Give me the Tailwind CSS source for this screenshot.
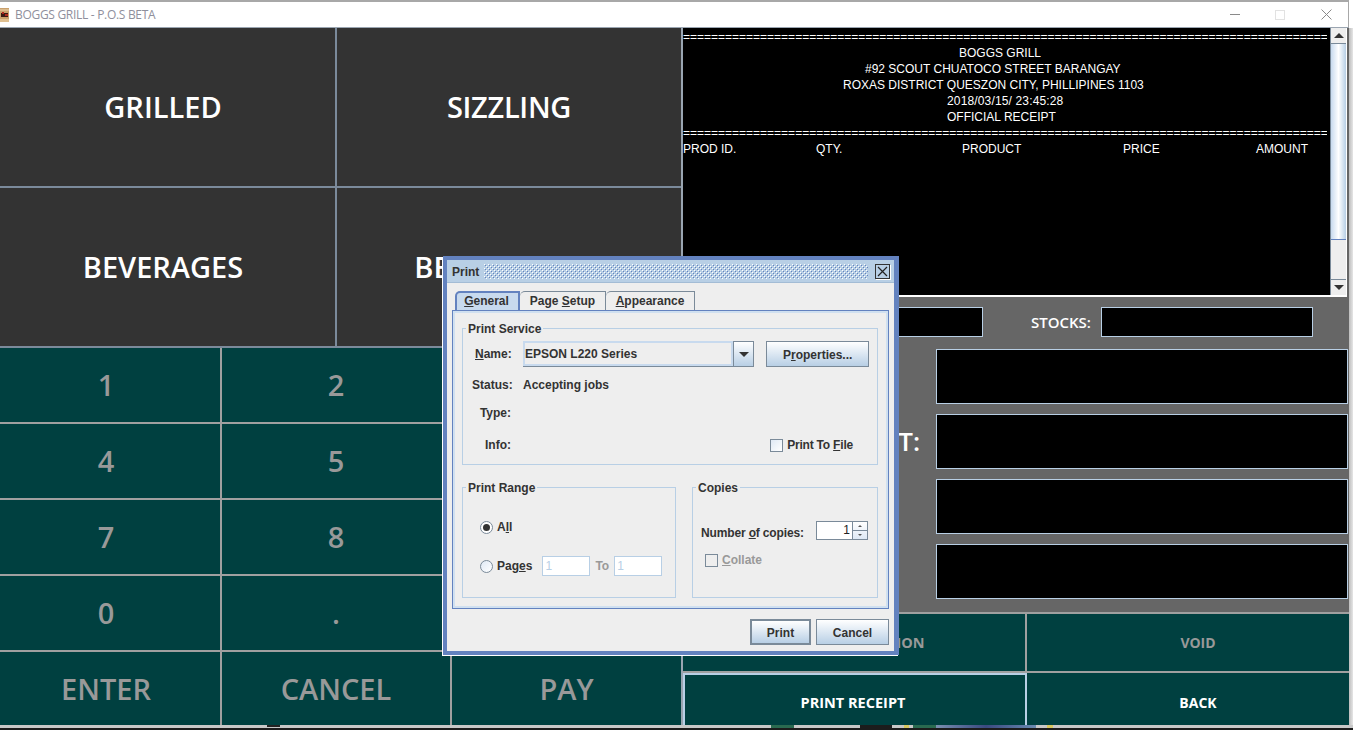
<!DOCTYPE html>
<html lang="en">
<head>
<meta charset="UTF-8">
<title>BOGGS GRILL - P.O.S BETA</title>
<script src="https://cdn.jsdelivr.net/npm/@tailwindcss/browser@4"></script>
</head>
<body class="bg-white overflow-hidden">
<div class="relative w-[1353px] h-[730px] overflow-hidden">
  <div class="flex h-[725px]">
    <div class="w-[1349px] shrink-0 flex flex-col">
      <!-- window title bar -->
      <div class="h-[28px] shrink-0 bg-white border-t-2 border-[#a8a8a8] border-b border-b-[#9aa5b1] border-r border-r-[#a8a8a8] flex items-center font-['Open_Sans',sans-serif] text-[12px] tracking-[-0.3px] text-[#8f8f9c]">
        <svg class="w-[9px] h-[14px] shrink-0" viewBox="0 0 9 14"><rect width="9" height="14" fill="#c9a06c"/><rect y="1" width="9" height="2" fill="#dcbb8c"/><rect x="1" y="5" width="7" height="4" fill="#3a1a14"/><rect x="2" y="4" width="2" height="2" fill="#b02a20"/><rect x="5" y="6" width="3" height="2" fill="#b02a20"/><rect y="11" width="9" height="3" fill="#e0c090"/></svg>
        <span class="ml-[6px]">BOGGS GRILL - P.O.S BETA</span>
        <div class="ml-auto flex items-center">
          <span class="w-[10px] h-px bg-[#8a8a8a]"></span>
          <span class="ml-[35px] w-[10px] h-[10px] border border-[#e2e2e2]"></span>
          <svg class="ml-[36px] mr-[16px] w-[11px] h-[11px]" viewBox="0 0 11 11"><path d="M0.5 0.5L10.5 10.5M10.5 0.5L0.5 10.5" stroke="#8a8a8a" fill="none"/></svg>
        </div>
      </div>
      <div class="flex flex-1 min-h-0">
        <!-- left: categories and keypad -->
        <div class="w-[681px] shrink-0 flex flex-col font-['Open_Sans',sans-serif] font-semibold">
          <div class="grid grid-cols-[337px_344px] grid-rows-[160px_160px] h-[320px] bg-[#333333] text-white text-[29px]">
            <div class="flex items-center justify-center border-r-2 border-b-2 border-[#7b8a9b] pr-[9px]">GRILLED</div>
            <div class="flex items-center justify-center border-b-2 border-[#7b8a9b] tracking-[-0.3px]">SIZZLING</div>
            <div class="flex items-center justify-center border-r-2 border-b-2 border-[#7b8a9b] pr-[9px]">BEVERAGES</div>
            <div class="flex items-center justify-center border-b-2 border-[#7b8a9b]">BEST SELLERS</div>
          </div>
          <div class="grid grid-cols-[222px_230px_229px] grid-rows-[76px_76px_76px_76px_73px] flex-1 bg-[#004040] text-[#999999] text-[29px]">
            <div class="flex items-center justify-center border-r-2 border-b-2 border-[#a0a0a0] pr-[8px]">1</div>
            <div class="flex items-center justify-center border-r-2 border-b-2 border-[#a0a0a0]">2</div>
            <div class="flex items-center justify-center border-b-2 border-[#a0a0a0]">3</div>
            <div class="flex items-center justify-center border-r-2 border-b-2 border-[#a0a0a0] pr-[8px]">4</div>
            <div class="flex items-center justify-center border-r-2 border-b-2 border-[#a0a0a0]">5</div>
            <div class="flex items-center justify-center border-b-2 border-[#a0a0a0]">6</div>
            <div class="flex items-center justify-center border-r-2 border-b-2 border-[#a0a0a0] pr-[8px]">7</div>
            <div class="flex items-center justify-center border-r-2 border-b-2 border-[#a0a0a0]">8</div>
            <div class="flex items-center justify-center border-b-2 border-[#a0a0a0]">9</div>
            <div class="flex items-center justify-center border-r-2 border-b-2 border-[#a0a0a0] pr-[8px]">0</div>
            <div class="flex items-center justify-center border-r-2 border-b-2 border-[#a0a0a0]">.</div>
            <div class="border-b-2 border-[#a0a0a0]"></div>
            <div class="flex items-center justify-center border-r-2 border-[#a0a0a0] pr-[8px]">ENTER</div>
            <div class="flex items-center justify-center border-r-2 border-[#a0a0a0]">CANCEL</div>
            <div class="flex items-center justify-center">PAY</div>
          </div>
        </div>
        <!-- right: receipt, totals and actions -->
        <div class="flex-1 flex flex-col bg-[#666666] border-l-2 border-[#9aa5b1]">
          <div class="h-[269px] w-[664px] shrink-0 flex bg-black border-b-2 border-r border-white">
            <div class="flex-1 overflow-hidden font-['Liberation_Sans',sans-serif] text-[12px] leading-[16px] text-white whitespace-nowrap pt-px">
              <div class="w-[644px] overflow-hidden">============================================================================================</div>
              <div class="pl-[276px]">BOGGS GRILL</div>
              <div class="pl-[182px]">#92 SCOUT CHUATOCO STREET BARANGAY</div>
              <div class="pl-[160px]">ROXAS DISTRICT QUESZON CITY, PHILLIPINES 1103</div>
              <div class="pl-[264px] tracking-[0.15px]">2018/03/15/ 23:45:28</div>
              <div class="pl-[264px]">OFFICIAL RECEIPT</div>
              <div class="w-[644px] overflow-hidden">============================================================================================</div>
              <div class="flex">
                <span class="w-[133px]">PROD ID.</span><span class="w-[146px]">QTY.</span><span class="w-[161px]">PRODUCT</span><span class="w-[133px]">PRICE</span><span>AMOUNT</span>
              </div>
            </div>
            <!-- scrollbar -->
            <div class="w-[16px] shrink-0 flex flex-col bg-[#eeeeee] border-l border-[#7a8a99]">
              <div class="h-[16px] flex items-center justify-center border-b border-[#7a8a99]"><span class="w-0 h-0 border-x-[5px] border-x-transparent border-b-[5px] border-b-[#333333]"></span></div>
              <div class="h-[196px] bg-gradient-to-r from-[#c8daee] via-white to-[#b8cfe5] border-b border-[#6382bf]"></div>
              <div class="flex-1"></div>
              <div class="h-[16px] flex items-center justify-center border-t border-[#7a8a99]"><span class="w-0 h-0 border-x-[5px] border-x-transparent border-t-[5px] border-t-[#333333]"></span></div>
            </div>
          </div>
          <div class="font-['Open_Sans',sans-serif] font-semibold text-white flex-1 flex flex-col">
            <div class="h-[52px] flex items-center text-[15px] pb-[2px]">
              <div class="ml-[215px] w-[85px] h-[30px] bg-black border border-[#b8cfe5]"></div>
              <span class="ml-[48px] w-[59px] whitespace-nowrap">STOCKS:</span>
              <div class="ml-[11px] w-[212px] h-[30px] bg-black border border-[#b8cfe5]"></div>
            </div>
            <div class="flex flex-col gap-[10px] h-[263px]">
              <div class="h-[55px] ml-[253px] mr-px bg-black border border-[#b8cfe5]"></div>
              <div class="h-[55px] flex items-center justify-end mr-px">
                <span class="text-[26px] mr-[16px]">AMOUNT:</span>
                <div class="w-[412px] h-[55px] bg-black border border-[#b8cfe5]"></div>
              </div>
              <div class="h-[55px] ml-[253px] mr-px bg-black border border-[#b8cfe5]"></div>
              <div class="h-[55px] ml-[253px] mr-px bg-black border border-[#b8cfe5]"></div>
            </div>
            <div class="grid grid-cols-[344px_1fr] grid-rows-[59px_52px] bg-[#004040] border-t-2 border-[#a0a0a0] text-[14px] font-bold">
              <div class="flex items-center justify-center text-[#999999] text-[14.5px] border-r-2 border-b-2 border-[#a0a0a0]">NEW TRANSACTION</div>
              <div class="flex items-center justify-center text-[#999999] border-b-2 border-[#a0a0a0] pl-[20px]">VOID</div>
              <div class="flex items-center justify-center text-[14.5px] border-2 border-b-0 border-[#b8cfe5] shadow-[inset_0_0_0_1px_#004040] pt-[6px] pr-[4px]">PRINT RECEIPT</div>
              <div class="flex items-center justify-center pt-[6px] pl-[20px]">BACK</div>
            </div>
          </div>
        </div>
      </div>
    </div>
    <!-- desktop behind the window -->
    <div class="flex-1 mt-[28px] bg-gradient-to-r from-[#bdbdbd] to-[#e6e6e6]"></div>
  </div>
  <!-- taskbar sliver -->
  <div class="h-[3px] flex bg-[#c8c8c8]">
    <span class="ml-[267px] w-[13px] h-[2px] bg-[#222222]"></span>
    <span class="ml-[491px] w-[23px] bg-[#2a6a50]"></span>
    <span class="ml-[66px] w-[32px] bg-[#1c1c1c]"></span>
    <span class="ml-[12px] w-[5px] bg-[#d8c860]"></span>
    <span class="ml-[4px] w-[23px] bg-[#2a6a50]"></span>
    <span class="w-[100px] bg-gradient-to-r from-[#7a8fb0] via-[#3a4a80] to-[#6a8ab0]"></span>
    <span class="ml-[11px] w-[6px] bg-[#d8c860]"></span>
  </div>
  <div class="h-[2px] bg-[#1c1c1c]"></div>

  <!-- print dialog -->
  <div class="absolute left-[443px] top-[256px] w-[456px] h-[399px] border-4 border-r-[5px] border-[#6382bf] bg-[#eeeeee] flex flex-col font-['Liberation_Sans',sans-serif] text-[12px] font-bold text-[#333333] shadow-[-1px_1px_0_white]">
    <div class="h-[23px] shrink-0 bg-[#b8cfe5] flex items-center pl-[5px] pr-[4px] border-b border-[#a3bcd5]">
      <span class="w-[27px] mt-[2px]">Print</span>
      <svg class="ml-[5px] w-[384px] h-[15px]" viewBox="0 0 384 15">
        <defs><pattern id="bumps" width="4" height="4" patternUnits="userSpaceOnUse"><rect width="1" height="1" fill="#ffffff"/><rect x="1" y="1" width="1" height="1" fill="#6382bf"/><rect x="2" y="2" width="1" height="1" fill="#ffffff"/><rect x="3" y="3" width="1" height="1" fill="#6382bf"/></pattern></defs>
        <rect width="384" height="15" fill="url(#bumps)"/>
      </svg>
      <div class="ml-[7px] w-[15px] h-[15px] bg-[#b8cfe5] border border-[#333333] flex items-center justify-center shadow-[1px_1px_0_white]">
        <svg class="w-[11px] h-[11px]" viewBox="0 0 11 11"><path d="M1 1L10 10M10 1L1 10" stroke="#222222" stroke-width="1.2" fill="none"/></svg>
      </div>
    </div>
    <div class="flex-1 px-[5px] pt-[8px] flex flex-col">
      <!-- tabs -->
      <div class="flex h-[19px] items-end pl-[3px]">
        <div class="h-[19px] w-[65px] bg-[#c8daee] border-2 border-b-0 border-[#6382bf] rounded-tl-[5px] flex items-center justify-center pb-[2px] pr-[2px]"><span><u>G</u>eneral</span></div>
        <div class="h-[19px] w-[86px] border border-b-0 border-l-0 border-[#7a8a99] rounded-tl-[5px] flex items-center justify-center"><span>Page <u>S</u>etup</span></div>
        <div class="h-[19px] w-[89px] border border-b-0 border-l-0 border-[#7a8a99] rounded-tl-[5px] flex items-center justify-center"><span><u>A</u>ppearance</span></div>
      </div>
      <!-- tab pane -->
      <div class="h-[299px] border border-[#6382bf] bg-[#eeeeee] shadow-[inset_0_0_0_2px_#d0e0f0] pl-[9px] pr-[10px] pt-[17px]">
        <div class="relative h-[137px] border border-[#b8cfe5]">
          <span class="absolute left-[3px] -top-[9px] bg-[#eeeeee] px-[2px]">Print Service</span>
          <div class="flex items-start pt-[12px] pl-[12px] pr-[8px]">
            <span class="w-[36px] text-right leading-[26px]"><u>N</u>ame:</span>
            <div class="ml-[12px] w-[232px] h-[26px] flex border border-[#7a8a99] bg-[#eeeeee]">
              <span class="flex-1 leading-[22px] border-2 border-[#c8daee] -ml-px -mt-px">EPSON L220 Series</span>
              <span class="w-[20px] flex items-center justify-center border-l border-[#7a8a99] bg-gradient-to-b from-white to-[#b8cfe5]"><span class="w-0 h-0 border-x-[5px] border-x-transparent border-t-[5px] border-t-[#333333]"></span></span>
            </div>
            <div class="ml-[12px] w-[103px] h-[26px] border border-[#7a8a99] bg-gradient-to-b from-white to-[#b8cfe5] text-center leading-[26px]">P<u>r</u>operties...</div>
          </div>
          <div class="flex pl-[9px] mt-[11px] leading-[14px]">
            <span class="w-[39px] text-right">Status:</span>
            <span class="ml-[12px]">Accepting jobs</span>
          </div>
          <div class="flex pl-[9px] mt-[14px] leading-[14px]">
            <span class="w-[39px] text-right">Type:</span>
          </div>
          <div class="flex items-center pl-[9px] mt-[18px] leading-[14px]">
            <span class="w-[39px] text-right">Info:</span>
            <div class="ml-auto mr-[24px] flex items-center">
              <span class="w-[13px] h-[13px] border border-[#7a8a99] bg-gradient-to-br from-[#dfe9f5] to-white"></span>
              <span class="ml-[4px] tracking-[-0.2px]">Print To <u>F</u>ile</span>
            </div>
          </div>
        </div>
        <div class="flex gap-[16px] mt-[22px]">
          <div class="relative w-[214px] h-[111px] border border-[#b8cfe5]">
            <span class="absolute left-[3px] -top-[9px] bg-[#eeeeee] px-[2px]">Print Range</span>
            <div class="flex items-center pl-[17px] mt-[30px]">
              <span class="w-[13px] h-[13px] rounded-full border border-[#7a8a99] bg-white flex items-center justify-center"><span class="w-[7px] h-[7px] rounded-full bg-[#333333]"></span></span>
              <span class="ml-[4px]">A<u>l</u>l</span>
            </div>
            <div class="flex items-center pl-[17px] mt-[20px]">
              <span class="w-[13px] h-[13px] rounded-full border border-[#7a8a99] bg-gradient-to-br from-[#dfe9f5] to-white"></span>
              <span class="ml-[4px]">Pag<u>e</u>s</span>
              <span class="ml-[10px] w-[48px] h-[20px] border border-[#b8cfe5] bg-white pl-[2px] leading-[18px] font-normal text-[#b8cfe5]">1</span>
              <span class="ml-[5px] text-[#999999]">To</span>
              <span class="ml-[5px] w-[48px] h-[20px] border border-[#b8cfe5] bg-white pl-[2px] leading-[18px] font-normal text-[#b8cfe5]">1</span>
            </div>
          </div>
          <div class="relative w-[186px] h-[111px] border border-[#b8cfe5]">
            <span class="absolute left-[3px] -top-[9px] bg-[#eeeeee] px-[2px]">Copies</span>
            <div class="flex items-center pl-[8px] mt-[33px]">
              <span class="tracking-[-0.15px] whitespace-nowrap translate-y-[2px]">Number <u>o</u>f copies:</span>
              <span class="ml-[12px] w-[37px] h-[19px] border border-[#7a8a99] bg-white text-right pr-[2px] leading-[17px] font-normal text-[#222222]">1</span>
              <span class="w-[15px] h-[19px] flex flex-col border border-l-0 border-[#7a8a99] bg-gradient-to-b from-white to-[#dfe9f5]">
                <span class="flex-1 flex items-center justify-center border-b border-[#7a8a99]"><span class="w-0 h-0 border-x-[2px] border-x-transparent border-b-[2px] border-b-[#555555]"></span></span>
                <span class="flex-1 flex items-center justify-center"><span class="w-0 h-0 border-x-[2px] border-x-transparent border-t-[2px] border-t-[#555555]"></span></span>
              </span>
            </div>
            <div class="flex items-center pl-[12px] mt-[11px] text-[#999999]">
              <span class="w-[13px] h-[13px] border border-[#7a8a99]"></span>
              <span class="ml-[4px]"><u>C</u>ollate</span>
            </div>
          </div>
        </div>
      </div>
      <!-- dialog buttons -->
      <div class="flex justify-end gap-[5px] mt-[10px]">
        <div class="w-[61px] h-[26px] border-[2px] border-[#7a8a99] bg-gradient-to-b from-white to-[#b8cfe5] text-center leading-[24px]">Print</div>
        <div class="w-[73px] h-[26px] border border-[#7a8a99] bg-gradient-to-b from-white to-[#b8cfe5] text-center leading-[26px]">Cancel</div>
      </div>
    </div>
  </div>
</div>
</body>
</html>
